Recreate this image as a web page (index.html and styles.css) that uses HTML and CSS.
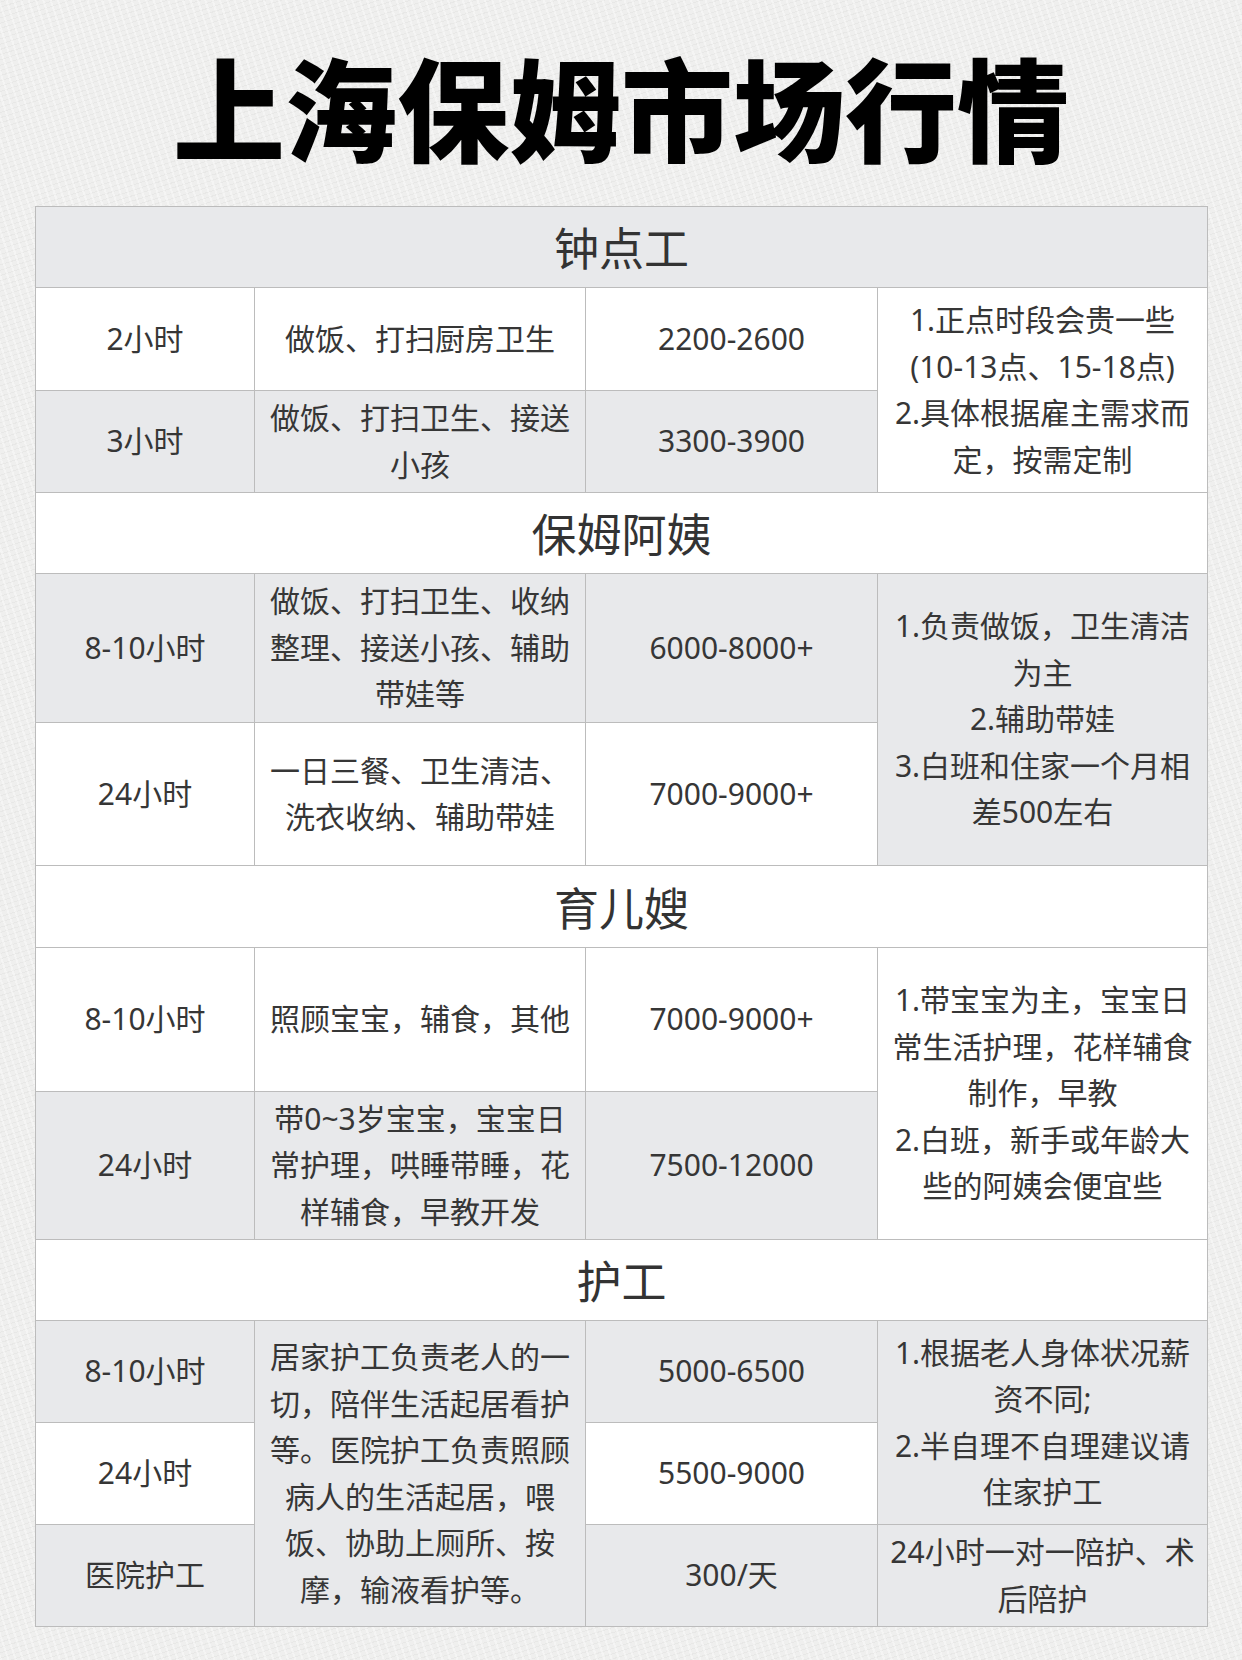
FILE: index.html
```html
<!DOCTYPE html>
<html lang="zh-CN">
<head>
<meta charset="utf-8">
<title>上海保姆市场行情</title>
<link rel="stylesheet" href="styles.css">
</head>
<body>
<div class="page">
  <h1 class="title">上海保姆市场行情</h1>
  <table class="price-table">
    <colgroup>
      <col class="c1"><col class="c2"><col class="c3"><col class="c4">
    </colgroup>
    <tbody>
      <tr class="sec g"><td colspan="4">钟点工</td></tr>
      <tr class="r103 w">
        <td>2小时</td>
        <td>做饭、打扫厨房卫生</td>
        <td>2200-2600</td>
        <td rowspan="2" class="w">1.正点时段会贵一些<br>(10-13点、15-18点)<br>2.具体根据雇主需求而<br>定，按需定制</td>
      </tr>
      <tr class="r102 g">
        <td>3小时</td>
        <td>做饭、打扫卫生、接送<br>小孩</td>
        <td>3300-3900</td>
      </tr>

      <tr class="sec w"><td colspan="4">保姆阿姨</td></tr>
      <tr class="r149 g">
        <td>8-10小时</td>
        <td>做饭、打扫卫生、收纳<br>整理、接送小孩、辅助<br>带娃等</td>
        <td>6000-8000+</td>
        <td rowspan="2" class="g">1.负责做饭，卫生清洁<br>为主<br>2.辅助带娃<br>3.白班和住家一个月相<br>差500左右</td>
      </tr>
      <tr class="r143 w">
        <td>24小时</td>
        <td>一日三餐、卫生清洁、<br>洗衣收纳、辅助带娃</td>
        <td>7000-9000+</td>
      </tr>

      <tr class="sec sec-tall w"><td colspan="4">育儿嫂</td></tr>
      <tr class="r144 w">
        <td>8-10小时</td>
        <td>照顾宝宝，辅食，其他</td>
        <td>7000-9000+</td>
        <td rowspan="2" class="w">1.带宝宝为主，宝宝日<br>常生活护理，花样辅食<br>制作，早教<br>2.白班，新手或年龄大<br>些的阿姨会便宜些</td>
      </tr>
      <tr class="r148 g">
        <td>24小时</td>
        <td>带0~3岁宝宝，宝宝日<br>常护理，哄睡带睡，花<br>样辅食，早教开发</td>
        <td>7500-12000</td>
      </tr>

      <tr class="sec w"><td colspan="4">护工</td></tr>
      <tr class="r102 g">
        <td>8-10小时</td>
        <td rowspan="3" class="g">居家护工负责老人的一<br>切，陪伴生活起居看护<br>等。医院护工负责照顾<br>病人的生活起居，喂<br>饭、协助上厕所、按<br>摩，输液看护等。</td>
        <td>5000-6500</td>
        <td rowspan="2" class="g">1.根据老人身体状况薪<br>资不同;<br>2.半自理不自理建议请<br>住家护工</td>
      </tr>
      <tr class="r102 w">
        <td>24小时</td>
        <td>5500-9000</td>
      </tr>
      <tr class="r102 g">
        <td>医院护工</td>
        <td>300/天</td>
        <td>24小时一对一陪护、术<br>后陪护</td>
      </tr>
    </tbody>
  </table>
</div>
</body>
</html>
```

FILE: styles.css
```css
* { box-sizing: border-box; }

html, body {
  margin: 0;
  padding: 0;
}

body {
  width: 1242px;
  height: 1660px;
  overflow: hidden;
  background-color: #efefee;
  background-image:
    repeating-linear-gradient(72deg, rgba(255,255,255,0.35) 0 2px, rgba(0,0,0,0) 2px 7px),
    repeating-linear-gradient(-18deg, rgba(210,210,208,0.25) 0 1px, rgba(0,0,0,0) 1px 5px);
  font-family: "Noto Sans", "Noto Sans CJK SC", sans-serif;
  color: #363636;
}

.page {
  padding: 0 35px;
}

.title {
  margin: 0;
  height: 206px;
  display: flex;
  align-items: center;
  justify-content: center;
  padding-top: 4px;
  font-family: "Noto Sans CJK SC", sans-serif;
  font-weight: 900;
  font-size: 112px;
  line-height: 1;
  color: #000;
  letter-spacing: 0;
}

.price-table {
  width: 1172px;
  table-layout: fixed;
  border-collapse: collapse;
  border: 1px solid #bcbcbc;
}

.c1 { width: 219px; }
.c2 { width: 331px; }
.c3 { width: 292px; }
.c4 { width: 330px; }

.price-table td {
  border: 1px solid #bcbcbc;
  text-align: center;
  vertical-align: middle;
  font-size: 30px;
  line-height: 46.5px;
  white-space: nowrap;
  padding: 0;
}

.g { background: #e8e9eb; }
.w { background: #ffffff; }

.sec td {
  height: 81px;
  font-size: 45px;
  line-height: 1.2;
  font-family: "Noto Sans CJK SC", sans-serif;
  color: #333;
}

.sec-tall td { height: 82px; }

.r102 td { height: 102px; }
.r103 td { height: 103px; }
.r143 td { height: 143px; }
.r144 td { height: 144px; }
.r148 td { height: 148px; }
.r149 td { height: 149px; }
```
